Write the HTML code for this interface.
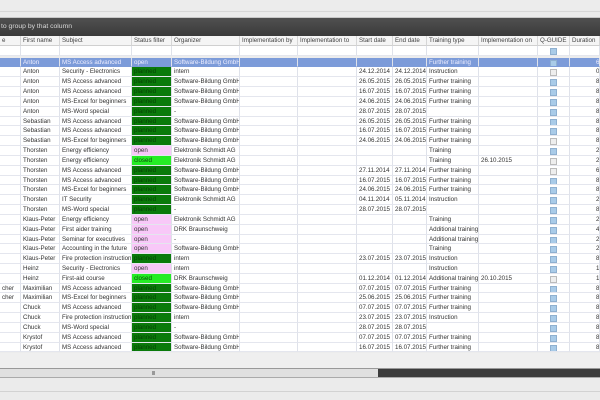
<!DOCTYPE html>
<html><head><meta charset="utf-8">
<style>
*{margin:0;padding:0;box-sizing:border-box}
html,body{width:600px;height:400px;overflow:hidden;background:#ececec;font-family:"Liberation Sans",sans-serif;font-size:6.2px;color:#333}
#top{position:absolute;left:0;top:0;width:600px;height:18px;background:#ececec;border-bottom:1px solid #c8c8c8}
#top:after{content:"";position:absolute;left:0;top:11px;width:600px;height:1px;background:#d8d8d8}
#bar{position:absolute;left:0;top:18px;width:600px;height:18px;background:linear-gradient(#505050,#3a3a3a);color:#d8d8d8;font-size:6.8px;line-height:18px;padding-left:1px}
.g{display:grid;grid-template-columns:21px 39px 72px 40px 68px 58px 59px 36px 34px 52px 59px 32px 30px;position:absolute;left:0;width:600px}
.g span{border-right:1px solid #dfe2ea;border-bottom:1px solid #e4e6ee;white-space:nowrap;overflow:hidden;padding-left:2px;background:#fff}
#hd{top:36px;height:10px;grid-auto-rows:10px}
#hd span{background:#f5f5f5;border-right:1px solid #d6d6d6;border-bottom:1px solid #d0d0d0;line-height:9px;color:#444}
#fl{top:46px;grid-auto-rows:10px}
#fl span{line-height:9px}
#rows{top:57.6px;grid-auto-rows:9.83px;background:#fff}
#rows span{line-height:9px}
.s span{background:#7c9bd9!important;color:#eef!important;border-bottom-color:#7c9bd9}
#rows span.p{background:#0a7a0a;color:#064206}
#rows span.o{background:#f8c8f8;color:#333}
#rows span.c{background:#25ec25;color:#0a4a0a}
.q{position:relative}
.q:after{content:"";position:absolute;left:12px;top:2px;width:5px;height:5px;background:#a9cbe8;border:1px solid #8fb0d0}
.q.n:after{background:#eee;border-color:#bbb}
.d{padding-left:26px!important}
#gap{position:absolute;left:0;top:353px;width:600px;height:16px;background:#efefef}
#sb{position:absolute;left:0;top:368px;width:600px;height:10px;background:#e0e0e0;border-top:1px solid #999;border-bottom:1px solid #aaa}
#sb .t{position:absolute;left:378px;top:0;width:222px;height:8px;background:#3c3c3c}
#sb .k{position:absolute;left:152px;top:2px;width:3px;height:4px;background:#999}
#bt{position:absolute;left:0;top:378px;width:600px;height:22px;background:#ebebeb}
#bt:after{content:"";position:absolute;left:0;top:13px;width:600px;height:1px;background:#d2d2d2}
</style></head><body>
<div id="top"></div>
<div id="bar">to group by that column</div>
<div class="g" id="hd"><span>e</span><span>First name</span><span>Subject</span><span>Status filter</span><span>Organizer</span><span>Implementation by</span><span>Implementation to</span><span>Start date</span><span>End date</span><span>Training type</span><span>Implementation on</span><span>Q-GUIDE</span><span>Duration</span></div>
<div class="g" id="fl"><span></span><span></span><span></span><span></span><span></span><span></span><span></span><span></span><span></span><span></span><span></span><span class="q"></span><span></span></div>
<div class="g" id="rows">
<div style="display:contents" class="s"><span></span><span>Anton</span><span>MS Access advanced</span><span class="o">open</span><span>Software-Bildung GmbH</span><span></span><span></span><span></span><span></span><span>Further training</span><span></span><span class="q"></span><span class="d">6</span></div>
<span></span><span>Anton</span><span>Security - Electronics</span><span class="p">planned</span><span>intern</span><span></span><span></span><span>24.12.2014</span><span>24.12.2014</span><span>Instruction</span><span></span><span class="q n"></span><span class="d">0</span>
<span></span><span>Anton</span><span>MS Access advanced</span><span class="p">planned</span><span>Software-Bildung GmbH</span><span></span><span></span><span>26.05.2015</span><span>26.05.2015</span><span>Further training</span><span></span><span class="q"></span><span class="d">8</span>
<span></span><span>Anton</span><span>MS Access advanced</span><span class="p">planned</span><span>Software-Bildung GmbH</span><span></span><span></span><span>16.07.2015</span><span>16.07.2015</span><span>Further training</span><span></span><span class="q"></span><span class="d">8</span>
<span></span><span>Anton</span><span>MS-Excel for beginners</span><span class="p">planned</span><span>Software-Bildung GmbH</span><span></span><span></span><span>24.06.2015</span><span>24.06.2015</span><span>Further training</span><span></span><span class="q"></span><span class="d">8</span>
<span></span><span>Anton</span><span>MS-Word special</span><span class="p">planned</span><span>-</span><span></span><span></span><span>28.07.2015</span><span>28.07.2015</span><span></span><span></span><span class="q"></span><span class="d">8</span>
<span></span><span>Sebastian</span><span>MS Access advanced</span><span class="p">planned</span><span>Software-Bildung GmbH</span><span></span><span></span><span>26.05.2015</span><span>26.05.2015</span><span>Further training</span><span></span><span class="q"></span><span class="d">8</span>
<span></span><span>Sebastian</span><span>MS Access advanced</span><span class="p">planned</span><span>Software-Bildung GmbH</span><span></span><span></span><span>16.07.2015</span><span>16.07.2015</span><span>Further training</span><span></span><span class="q"></span><span class="d">8</span>
<span></span><span>Sebastian</span><span>MS-Excel for beginners</span><span class="p">planned</span><span>Software-Bildung GmbH</span><span></span><span></span><span>24.06.2015</span><span>24.06.2015</span><span>Further training</span><span></span><span class="q n"></span><span class="d">8</span>
<span></span><span>Thorsten</span><span>Energy efficiency</span><span class="o">open</span><span>Elektronik Schmidt AG</span><span></span><span></span><span></span><span></span><span>Training</span><span></span><span class="q"></span><span class="d">2</span>
<span></span><span>Thorsten</span><span>Energy efficiency</span><span class="c">closed</span><span>Elektronik Schmidt AG</span><span></span><span></span><span></span><span></span><span>Training</span><span>26.10.2015</span><span class="q n"></span><span class="d">2</span>
<span></span><span>Thorsten</span><span>MS Access advanced</span><span class="p">planned</span><span>Software-Bildung GmbH</span><span></span><span></span><span>27.11.2014</span><span>27.11.2014</span><span>Further training</span><span></span><span class="q n"></span><span class="d">6</span>
<span></span><span>Thorsten</span><span>MS Access advanced</span><span class="p">planned</span><span>Software-Bildung GmbH</span><span></span><span></span><span>16.07.2015</span><span>16.07.2015</span><span>Further training</span><span></span><span class="q"></span><span class="d">8</span>
<span></span><span>Thorsten</span><span>MS-Excel for beginners</span><span class="p">planned</span><span>Software-Bildung GmbH</span><span></span><span></span><span>24.06.2015</span><span>24.06.2015</span><span>Further training</span><span></span><span class="q"></span><span class="d">8</span>
<span></span><span>Thorsten</span><span>IT Security</span><span class="p">planned</span><span>Elektronik Schmidt AG</span><span></span><span></span><span>04.11.2014</span><span>05.11.2014</span><span>Instruction</span><span></span><span class="q"></span><span class="d">2</span>
<span></span><span>Thorsten</span><span>MS-Word special</span><span class="p">planned</span><span>-</span><span></span><span></span><span>28.07.2015</span><span>28.07.2015</span><span></span><span></span><span class="q"></span><span class="d">8</span>
<span></span><span>Klaus-Peter</span><span>Energy efficiency</span><span class="o">open</span><span>Elektronik Schmidt AG</span><span></span><span></span><span></span><span></span><span>Training</span><span></span><span class="q"></span><span class="d">2</span>
<span></span><span>Klaus-Peter</span><span>First aider training</span><span class="o">open</span><span>DRK Braunschweig</span><span></span><span></span><span></span><span></span><span>Additional training</span><span></span><span class="q"></span><span class="d">4</span>
<span></span><span>Klaus-Peter</span><span>Seminar for executives</span><span class="o">open</span><span>-</span><span></span><span></span><span></span><span></span><span>Additional training</span><span></span><span class="q"></span><span class="d">2</span>
<span></span><span>Klaus-Peter</span><span>Accounting in the future</span><span class="o">open</span><span>Software-Bildung GmbH</span><span></span><span></span><span></span><span></span><span>Training</span><span></span><span class="q"></span><span class="d">2</span>
<span></span><span>Klaus-Peter</span><span>Fire protection instruction</span><span class="p">planned</span><span>intern</span><span></span><span></span><span>23.07.2015</span><span>23.07.2015</span><span>Instruction</span><span></span><span class="q"></span><span class="d">8</span>
<span></span><span>Heinz</span><span>Security - Electronics</span><span class="o">open</span><span>intern</span><span></span><span></span><span></span><span></span><span>Instruction</span><span></span><span class="q"></span><span class="d">1</span>
<span></span><span>Heinz</span><span>First-aid course</span><span class="c">closed</span><span>DRK Braunschweig</span><span></span><span></span><span>01.12.2014</span><span>01.12.2014</span><span>Additional training</span><span>20.10.2015</span><span class="q n"></span><span class="d">1</span>
<span>cher</span><span>Maximilian</span><span>MS Access advanced</span><span class="p">planned</span><span>Software-Bildung GmbH</span><span></span><span></span><span>07.07.2015</span><span>07.07.2015</span><span>Further training</span><span></span><span class="q"></span><span class="d">8</span>
<span>cher</span><span>Maximilian</span><span>MS-Excel for beginners</span><span class="p">planned</span><span>Software-Bildung GmbH</span><span></span><span></span><span>25.06.2015</span><span>25.06.2015</span><span>Further training</span><span></span><span class="q"></span><span class="d">8</span>
<span></span><span>Chuck</span><span>MS Access advanced</span><span class="p">planned</span><span>Software-Bildung GmbH</span><span></span><span></span><span>07.07.2015</span><span>07.07.2015</span><span>Further training</span><span></span><span class="q"></span><span class="d">8</span>
<span></span><span>Chuck</span><span>Fire protection instruction</span><span class="p">planned</span><span>intern</span><span></span><span></span><span>23.07.2015</span><span>23.07.2015</span><span>Instruction</span><span></span><span class="q"></span><span class="d">8</span>
<span></span><span>Chuck</span><span>MS-Word special</span><span class="p">planned</span><span>-</span><span></span><span></span><span>28.07.2015</span><span>28.07.2015</span><span></span><span></span><span class="q"></span><span class="d">8</span>
<span></span><span>Krystof</span><span>MS Access advanced</span><span class="p">planned</span><span>Software-Bildung GmbH</span><span></span><span></span><span>07.07.2015</span><span>07.07.2015</span><span>Further training</span><span></span><span class="q"></span><span class="d">8</span>
<span></span><span>Krystof</span><span>MS Access advanced</span><span class="p">planned</span><span>Software-Bildung GmbH</span><span></span><span></span><span>16.07.2015</span><span>16.07.2015</span><span>Further training</span><span></span><span class="q"></span><span class="d">8</span>
</div>
<div id="gap"></div>
<div id="sb"><div class="k"></div><div class="t"></div></div>
<div id="bt"></div>
</body></html>
